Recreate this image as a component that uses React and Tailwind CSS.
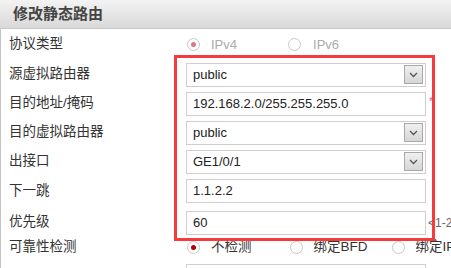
const cjk = { fontFamily: '"Liberation Sans", "Noto Sans CJK SC", sans-serif' };

function Radio({ checked, disabled }) {
  return (
    <span className="flex h-[13px] w-[13px] shrink-0 items-center justify-center rounded-full border border-[#c8c8c8] bg-white">
      {checked && (
        <span className={`h-[5px] w-[5px] rounded-full ${disabled ? "bg-[#d67a80]" : "bg-[#b40000]"}`} />
      )}
    </span>
  );
}

function Row({ label, h, children, extra }) {
  return (
    <div className={`flex items-center ${h}`}>
      <div className="w-[185px] shrink-0 pl-[8px] text-[13.5px] text-[#333]">{label}</div>
      <div className="w-[240px] shrink-0">{children}</div>
      {extra}
    </div>
  );
}

function Select({ value }) {
  return (
    <div className="flex h-[24px] items-center justify-between border border-[#cfcfcf] bg-white pl-[6px] pr-[2px] text-[13px] text-[#222]">
      <span>{value}</span>
      <span className="flex h-[19px] w-[19px] items-center justify-center border border-[#a8a8a8] bg-gradient-to-b from-[#f0f0f0] to-[#d6d6d6]">
        <svg width="9" height="6" viewBox="0 0 9 6">
          <path d="M1 1l3.5 3.5L8 1" fill="none" stroke="#555" strokeWidth="1.3" />
        </svg>
      </span>
    </div>
  );
}

function Input({ value }) {
  return (
    <div className="flex h-[24px] items-center border border-[#cfcfcf] bg-white pl-[6px] text-[13px] text-[#222]">
      {value}
    </div>
  );
}

export default function App() {
  return (
    <div className="relative h-[268px] w-[451px] overflow-hidden bg-white" style={cjk}>
      <div className="flex h-[29px] items-center border-b border-[#c9c9c9] bg-gradient-to-b from-[#f3f3f3] to-[#d9d9d9] pl-[13px] text-[15px] font-bold text-[#444]">
        修改静态路由
      </div>

      <div className="border-l border-[#c4c4c4]">
        <Row label="协议类型" h="h-[31px]">
          <div className="flex items-center text-[13px] text-[#aaa]">
            <span className="ml-[1px]"><Radio checked disabled /></span>
            <span className="ml-[11px]">IPv4</span>
            <span className="ml-[51px]"><Radio /></span>
            <span className="ml-[12px]">IPv6</span>
          </div>
        </Row>
        <Row label="源虚拟路由器" h="h-[29px]">
          <Select value="public" />
        </Row>
        <Row
          label="目的地址/掩码"
          h="h-[29px]"
          extra={<span className="mb-[5px] ml-[3px] text-[11px] text-[#f0508c]">*</span>}
        >
          <Input value="192.168.2.0/255.255.255.0" />
        </Row>
        <Row label="目的虚拟路由器" h="h-[29px]">
          <Select value="public" />
        </Row>
        <Row label="出接口" h="h-[29px]">
          <Select value="GE1/0/1" />
        </Row>
        <Row label="下一跳" h="h-[30px]">
          <Input value="1.1.2.2" />
        </Row>
        <Row
          label="优先级"
          h="h-[33px]"
          extra={<span className="ml-[2px] whitespace-nowrap text-[12px] text-[#666]">&lt;1-255&gt;</span>}
        >
          <Input value="60" />
        </Row>
        <div className="flex h-[17px] items-center">
          <div className="w-[185px] shrink-0 pl-[8px] text-[13.5px] text-[#333]">可靠性检测</div>
          <div className="flex items-center whitespace-nowrap text-[13.5px] text-[#333]">
            <span className="ml-[1px]"><Radio checked /></span>
            <span className="ml-[11px]">不检测</span>
            <span className="ml-[38px]"><Radio /></span>
            <span className="ml-[11px]">绑定BFD</span>
            <span className="ml-[24px]"><Radio /></span>
            <span className="ml-[11px]">绑定IP</span>
          </div>
        </div>
        <div className="mt-[8px] flex h-[24px] items-center">
          <div className="w-[185px] shrink-0 pl-[8px] text-[13.5px] text-[#333]">描述</div>
          <div className="h-[24px] w-[240px] border border-[#cfcfcf]" />
        </div>
      </div>

      <div className="pointer-events-none absolute left-[174px] top-[55px] h-[186px] w-[261px] border-[3px] border-[#f53b3b]" />
    </div>
  );
}
